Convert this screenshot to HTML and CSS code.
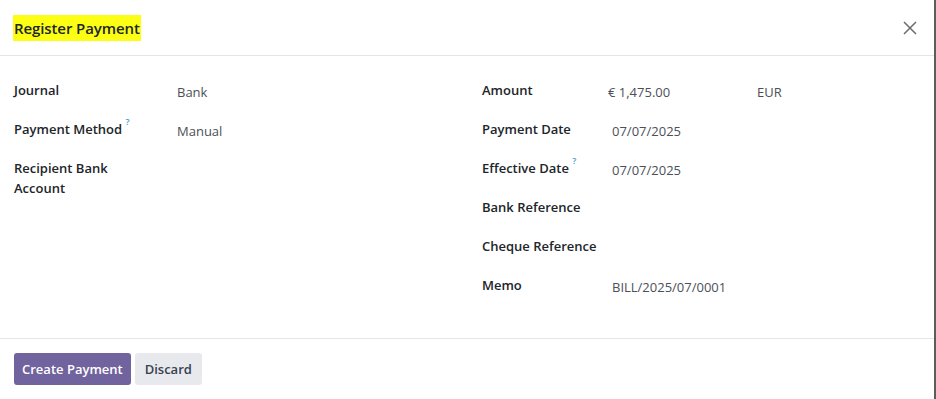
FILE: index.html
```html
<!DOCTYPE html>
<html lang="en">
<head>
  <meta charset="UTF-8">
  <meta name="viewport" content="width=device-width, initial-scale=1.0">
  <title>Register Payment</title>
  <link rel="stylesheet" href="styles.css">
</head>
<body>
  <div class="modal">
    <header class="modal-header">
      <h4 class="modal-title"><span class="mark">Register Payment</span></h4>
      <button class="btn-close" aria-label="Close">
        <svg width="14" height="14" viewBox="0 0 14 14"><path d="M1 1L13 13M13 1L1 13" stroke="#6b6b6b" stroke-width="1.5" fill="none"/></svg>
      </button>
    </header>

    <main class="modal-body">
      <div class="group group-left">
        <div class="row">
          <div class="label">Journal</div>
          <div class="value">Bank</div>
        </div>
        <div class="row">
          <div class="label">Payment Method <sup class="help">?</sup></div>
          <div class="value">Manual</div>
        </div>
        <div class="row">
          <div class="label">Recipient Bank<br>Account</div>
          <div class="value"></div>
        </div>
      </div>

      <div class="group group-right">
        <div class="row">
          <div class="label">Amount</div>
          <div class="value value-amount">
            <span class="amount">€ 1,475.00</span>
            <span class="currency">EUR</span>
          </div>
        </div>
        <div class="row">
          <div class="label">Payment Date</div>
          <div class="value">07/07/2025</div>
        </div>
        <div class="row">
          <div class="label">Effective Date <sup class="help">?</sup></div>
          <div class="value">07/07/2025</div>
        </div>
        <div class="row">
          <div class="label">Bank Reference</div>
          <div class="value"></div>
        </div>
        <div class="row">
          <div class="label">Cheque Reference</div>
          <div class="value"></div>
        </div>
        <div class="row">
          <div class="label">Memo</div>
          <div class="value">BILL/2025/07/0001</div>
        </div>
      </div>
    </main>

    <footer class="modal-footer">
      <button class="btn btn-primary">Create Payment</button>
      <button class="btn btn-secondary">Discard</button>
    </footer>
  </div>
</body>
</html>
```

FILE: styles.css
```css
body { margin: 0; font-family: "Open Sans", Arial, sans-serif; font-size: 13px; color: #212529; background: #fff; }
.modal { width: 934px; height: 399px; border-right: 2px solid #5c5c5c; display: flex; flex-direction: column; background: #fff; }
.modal-header { height: 56px; border-bottom: 1px solid #e4e4e4; display: flex; align-items: center; justify-content: space-between; padding: 0 17px 0 13px; box-sizing: border-box; flex-shrink: 0; }
.modal-title { margin: 0; font-size: 15px; font-weight: 600; letter-spacing: -0.1px; }
.mark { background: #fcff14; padding: 3px 1px; }
.btn-close { border: 0; background: none; padding: 0; width: 14px; height: 14px; cursor: pointer; }
.modal-body { flex: 1; display: grid; grid-template-columns: 454px 1fr; padding: 24px 14px 0; box-sizing: border-box; border-bottom: 1px solid #e2e5ea; }
.group-right { padding-left: 14px; }
.row { display: flex; min-height: 39px; line-height: 20px; }
.label { font-weight: 600; flex-shrink: 0; }
.group-left .label { width: 163px; }
.group-right .label { width: 130px; }
.value { color: #4b5058; padding-top: 2px; }
.value-amount { display: flex; margin-left: -4px; }
.amount { width: 149px; }
.help { color: #3b9fcf; font-size: 9px; vertical-align: top; line-height: 12px; position: relative; top: -3px; }
.modal-footer { height: 60px; display: flex; align-items: center; gap: 4px; padding: 0 14px; box-sizing: border-box; flex-shrink: 0; }
.btn { border: 0; border-radius: 3px; height: 32px; padding: 0 10px; font-family: inherit; font-size: 13px; font-weight: 600; cursor: pointer; }
.btn-primary { background: #71639e; color: #fff; padding: 0 8px; }
.btn-secondary { background: #e7e9ed; color: #374151; }
```
